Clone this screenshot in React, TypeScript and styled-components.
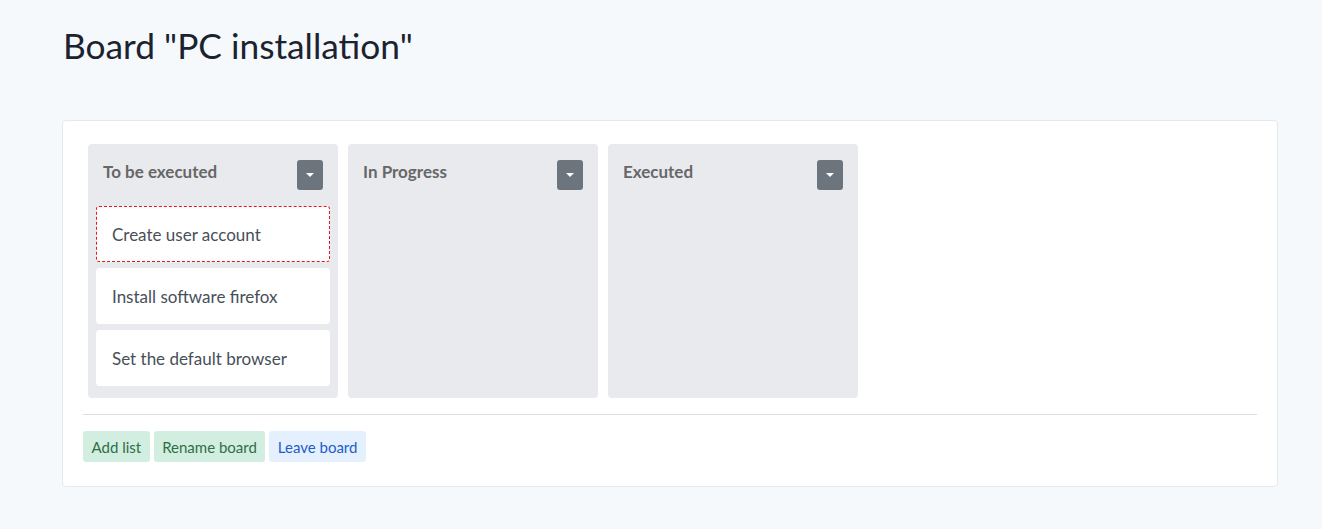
import React from "react";
import styled, { createGlobalStyle } from "styled-components";

const Global = createGlobalStyle`
  html, body { margin: 0; padding: 0; }
  body {
    background: #f5f9fc;
    font-family: "Source Sans Pro", Lato, "Noto Sans", sans-serif;
    color: #212529;
  }
`;

const Page = styled.div`
  padding: 0 44px 0 62px;
`;

const Title = styled.h1`
  margin: 0;
  padding: 24px 0 0 1px;
  height: 120px;
  box-sizing: border-box;
  font-size: 35.3px;
  font-weight: 400;
  line-height: 44px;
  color: #1c2330;
`;

const Card = styled.div`
  background: #fff;
  border: 1px solid #e4e9ee;
  border-radius: 4px;
  padding: 20px 20px 20px;
`;

const Lists = styled.div`
  display: flex;
  gap: 10px;
  padding: 3px 5px 0;
  align-items: flex-start;
`;

const List = styled.div`
  width: 250px;
  min-height: 254px;
  box-sizing: border-box;
  background: #e9eaee;
  border-radius: 4px;
  padding: 16px 8px 12px;
  display: flex;
  flex-direction: column;
  gap: 6px;
`;

const ListHeader = styled.div`
  display: flex;
  align-items: flex-start;
  justify-content: space-between;
  padding: 0 7px 0 7px;
  margin-bottom: 10px;
`;

const ListTitle = styled.span`
  padding-top: 1px;
  font-size: 17px;
  line-height: 22px;
  font-weight: 700;
  color: #676767;
`;

const DropButton = styled.button`
  width: 26px;
  height: 30px;
  border: none;
  border-radius: 3px;
  background: #6c747d;
  padding: 0;
  display: flex;
  align-items: center;
  justify-content: center;
  &::after {
    content: "";
    width: 0;
    height: 0;
    border-left: 4px solid transparent;
    border-right: 4px solid transparent;
    border-top: 4px solid #fff;
  }
`;

const Task = styled.div<{ $active?: boolean }>`
  height: 56px;
  box-sizing: border-box;
  background: #fff;
  border-radius: 3px;
  border: 1px ${(p) => (p.$active ? "dashed #e8141b" : "solid #fff")};
  padding: 0 15px;
  display: flex;
  align-items: center;
  font-size: 17px;
  color: #474f59;
`;

const Divider = styled.hr`
  border: none;
  border-top: 1px solid #dcdfe2;
  margin: 16px 0 16px;
`;

const Actions = styled.div`
  display: flex;
  gap: 4px;
  margin-bottom: 4px;
`;

const ActionButton = styled.button<{ $tone: "green" | "blue" }>`
  height: 31px;
  border: none;
  border-radius: 3px;
  padding: 0 8.5px;
  font-family: inherit;
  font-size: 15px;
  background: ${(p) => (p.$tone === "green" ? "#d2eee0" : "#e5f0ff")};
  color: ${(p) => (p.$tone === "green" ? "#2f6f47" : "#1e5cc6")};
`;

const lists = [
  {
    title: "To be executed",
    tasks: ["Create user account", "Install software firefox", "Set the default browser"],
  },
  { title: "In Progress", tasks: [] as string[] },
  { title: "Executed", tasks: [] as string[] },
];

export default function App() {
  return (
    <>
      <Global />
      <Page>
        <Title>Board "PC installation"</Title>
        <Card>
          <Lists>
            {lists.map((l) => (
              <List key={l.title}>
                <ListHeader>
                  <ListTitle>{l.title}</ListTitle>
                  <DropButton aria-label="menu" />
                </ListHeader>
                {l.tasks.map((t, i) => (
                  <Task key={t} $active={i === 0}>
                    {t}
                  </Task>
                ))}
              </List>
            ))}
          </Lists>
          <Divider />
          <Actions>
            <ActionButton $tone="green">Add list</ActionButton>
            <ActionButton $tone="green">Rename board</ActionButton>
            <ActionButton $tone="blue">Leave board</ActionButton>
          </Actions>
        </Card>
      </Page>
    </>
  );
}
